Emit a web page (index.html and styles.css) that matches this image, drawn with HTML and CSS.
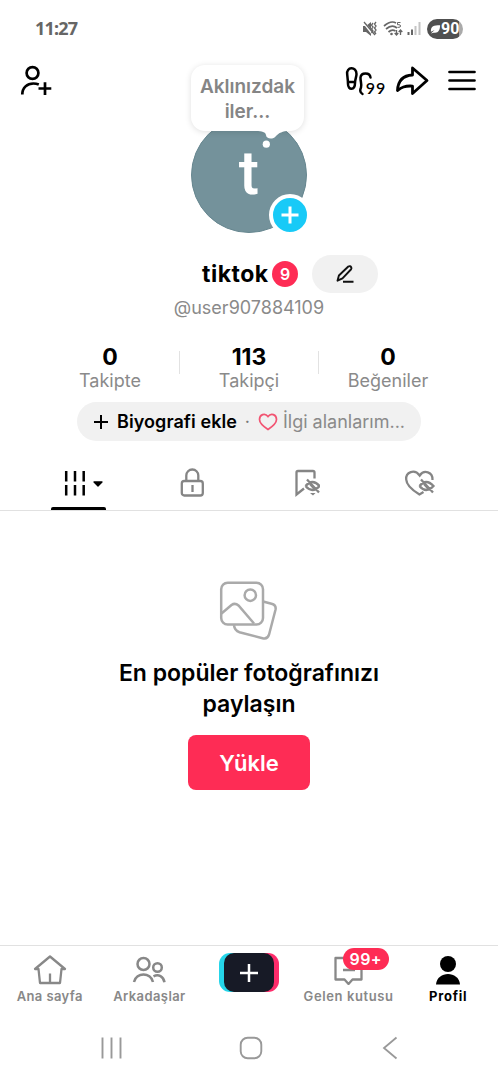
FILE: index.html
```html
<!DOCTYPE html>
<html lang="tr">
<head>
<meta charset="utf-8">
<meta name="viewport" content="width=device-width, initial-scale=1">
<title>Profil</title>
<link rel="stylesheet" href="styles.css">
</head>
<body>
<div class="screen">
  <div class="status">
    <span class="clock">11:27</span>
    <div class="status-icons">
      <svg width="60" height="20" viewBox="0 0 60 20" fill="none" stroke="#666" stroke-width="1.300">
        <path d="M1 7h3l5-4v14l-5-4H1z" fill="#666" stroke="none"/>
        <path d="M1.500 3l10 13" stroke="#fff" stroke-width="2.600"/><path d="M2 3l11 13"/>
        <path d="M11 4l-1.500 2 1.500 2-1.500 2 1.500 2-1.500 2M14 3l-1.500 2 1.500 2-1.500 2 1.500 2-1.500 2 1.500 2"/>
        <path d="M22 7q7-6 12-3M24 10q6-5 11-1M26.500 13q3.500-3 7-1" stroke-width="1.700"/>
        <circle cx="29.500" cy="15" r="1.300" fill="#666" stroke="none"/>
        <path d="M34.500 11v5m-1.800-2l1.800 2 1.800-2M38.500 16v-5m-1.800 2l1.800-2 1.800 2"/>
        <path d="M38.500 3.500h-3v2.200h1.500q1.500 0 1.500 1.300t-1.500 1.300h-1.500" stroke-width="1"/>
        <path d="M46.500 13v3M50 10.500V16" stroke-width="2"/><path d="M53.500 7v9M57.500 3v13" stroke="#c4c4c4" stroke-width="2"/>
      </svg>
      <span class="battery">
        <svg width="11" height="12" viewBox="0 0 12 12"><path d="M1 8C1 3 4 2 11 2c0 5-2 9-7 8l-3 1 4-4-4 2z" fill="#fff"/></svg>
        <b>90</b>
      </span>
    </div>
  </div>

  <header class="header">
    <div class="header-left">
      <svg width="32" height="32" viewBox="0 0 32 32" fill="none" stroke="#000" stroke-width="2.700">
        <circle cx="12.500" cy="8" r="5.900"/><path d="M2.300 29.500c0-7 5-11 11-11q3 0 5.500 1M18.500 23.500h12.800M25 17.300v12.600"/>
      </svg>
    </div>
    <div class="profile-photo">
      <div class="avatar">t</div>
      <div class="bubble">Aklınızdak<br>iler...</div>
      <svg class="bubble-tail" width="50" height="24" viewBox="0 0 50 24" fill="#fff"><path d="M3 0h34c-8 0-11 2-14 5-3 4-10 3-10-1C12.500 1 9 0 3 0z"/><circle cx="13.300" cy="13.200" r="3.600"/></svg>
      <span class="add"><svg width="18" height="18" viewBox="0 0 18 18" stroke="#fff" stroke-width="3"><path d="M.5 9h17M9 .5v17"/></svg></span>
    </div>
    <div class="header-right">
      <div class="steps">
        <svg width="27" height="30" viewBox="0 0 27 30" fill="none" stroke="#000" stroke-width="2.500" stroke-linecap="round">
          <path d="M2.200 8.500C.8.500 11.700 0 11.500 8c0 3-1.500 5-1.500 9 0 7.500-7 7.500-7 1 0-3-.4-6-.8-9.500zM3 16h7"/>
          <path d="M25.500 11.500C25 6 16 6 15.500 11.500c-.2 4 1.500 6.500.5 10-1 2-1.500 5 1.500 6.500"/>
        </svg><b>99</b>
      </div>
      <svg class="share" width="34" height="32" viewBox="0 0 34 32" fill="none" stroke="#000" stroke-width="2.800" stroke-linejoin="round"><path d="M17.500 3L32 15.500 17.500 28.500v-7.400C9 20.500 6 23 2.500 25.500 3 15.500 8 10.500 17.500 10z"/></svg>
      <svg width="28" height="22" viewBox="0 0 28 22" stroke="#000" stroke-width="2.700" stroke-linecap="round"><path d="M1.500 2h25M1.500 10.500h25M1.500 19h25"/></svg>
    </div>
  </header>

  <div class="name-row">
    <h1 class="name">tiktok</h1><span class="count">9</span>
    <button class="edit" aria-label="Düzenle"><svg width="20" height="20" viewBox="0 0 20 20" fill="none" stroke="#111" stroke-width="1.900" stroke-linejoin="round"><path d="M13.300 2.500q2-1 3 1 .5 1-.4 2L7.500 14.300l-5 2.400 1.400-5.200zM8 17.700h10.500"/></svg></button>
  </div>
  <p class="handle">@user907884109</p>

  <div class="stats">
    <div class="stat"><b>0</b><span>Takipte</span></div>
    <div class="stat"><b>113</b><span>Takipçi</span></div>
    <div class="stat"><b>0</b><span>Beğeniler</span></div>
  </div>

  <div class="bio">
    <svg width="16" height="16" viewBox="0 0 16 16" stroke="#000" stroke-width="2"><path d="M1 8h14M8 1v14"/></svg>
    <b>Biyografi ekle</b><span class="dot">·</span>
    <svg width="20" height="18" viewBox="0 0 20 18" fill="none" stroke="#f25472" stroke-width="1.700"><path d="M10 3.500C7-.5 1.500 1.500 1.500 6.500c0 4 4 7 8.500 10 4.500-3 8.500-6 8.500-10C18.500 1.500 13-.5 10 3.500z"/></svg>
    <span class="interests">İlgi alanlarım...</span>
  </div>

  <div class="tabs">
    <div class="tab active">
      <svg class="grid-icon" width="40" height="28" viewBox="0 0 40 28" stroke="#000" stroke-width="2.500"><path d="M2.200 2v10.500M11 2v10.500M19.700 2v10.500M2.200 16v10.500M11 16v10.500M19.700 16v10.500"/><path d="M30 13h8l-4 4z" fill="#000" stroke-width="1.300" stroke-linejoin="round"/></svg>
    </div>
    <div class="tab"><svg width="26" height="30" viewBox="0 0 26 30" fill="none" stroke="#858585" stroke-width="2.300"><rect x="2.800" y="13" width="21" height="14.500" rx="2.500"/><path d="M7.300 13V7.500a6 6 0 0 1 12 0V13M13.500 17v7"/></svg></div>
    <div class="tab"><svg width="28" height="30" viewBox="0 0 28 30" fill="none" stroke="#858585" stroke-width="2.300"><path d="M22.500 10.500V4.500Q22.500 3 21 3H6Q4.500 3 4.500 4.500v22l7.500-6"/><path d="M18 25h5.500L21 27.500z" fill="#858585" stroke="none"/><path d="M13.500 18q7-8 14 0-7 8-14 0M15 11.500l12 13M18 16l5 5.500"/></svg></div>
    <div class="tab"><svg width="32" height="30" viewBox="0 0 32 30" fill="none" stroke="#858585" stroke-width="2.300"><path d="M28.500 12c.5-8-8.500-11-12.800-4.500C10.500.5 1.500 4 2.200 11.500 2.500 17 8 22 15.500 26.500l4-2.500"/><path d="M15.500 18q6.500-8 14 0-7.500 8-14 0M17 11.500l12 13M20 16l5 5.500"/></svg></div>
  </div>

  <main class="empty">
    <svg width="60" height="62" viewBox="0 0 60 62" fill="none" stroke="#aaa" stroke-width="2.500">
      <rect x="2.200" y="3.700" width="41.800" height="41.800" rx="6.500"/><circle cx="31.300" cy="16.200" r="5.700"/>
      <path d="M2.500 34.500l10-8.500q3.500-2.500 7 .5L35 44.500"/><path d="M44 22.500l8.500 2.200q5 1.300 4 6l-6.500 25q-1.500 5-6.500 3.500l-23-6q-5-1.500-5.500-7"/>
    </svg>
    <h2>En popüler fotoğrafınızı<br>paylaşın</h2>
    <button class="upload">Yükle</button>
  </main>

  <nav class="nav">
    <div class="nav-item"><svg width="34" height="32" viewBox="0 0 34 32" fill="none" stroke="#888" stroke-width="2.300" stroke-linejoin="round"><path d="M2 16L17 3.500 32 16h-3.500L27 30H7L5.500 16zM17 20.500V30"/></svg><span>Ana sayfa</span></div>
    <div class="nav-item"><svg width="34" height="32" viewBox="0 0 34 32" fill="none" stroke="#888" stroke-width="2.500"><circle cx="11.500" cy="11" r="6"/><circle cx="25.500" cy="14.500" r="4.300"/><path d="M2 29c2.500-10 16.500-10 19 0M21.500 23.300c5-2.500 10 0 11 6"/></svg><span>Arkadaşlar</span></div>
    <div class="nav-item"><div class="create"><div class="create-inner"><svg width="20" height="20" viewBox="0 0 20 20" stroke="#fff" stroke-width="2.500"><path d="M1 10h18M10 1v18"/></svg></div></div></div>
    <div class="nav-item inbox"><svg width="34" height="32" viewBox="0 0 34 32" fill="none" stroke="#888" stroke-width="2.300" stroke-linejoin="round"><path d="M3.500 5h26v21.500h-9L16.500 31l-4-4.500h-9zM11 17h12"/></svg><i class="badge">99+</i><span>Gelen kutusu</span></div>
    <div class="nav-item current"><svg width="34" height="32" viewBox="0 0 34 32"><circle cx="17" cy="11" r="8"/><path d="M5 31.500C6 17.500 28 17.500 29 31.500z"/></svg><span>Profil</span></div>
  </nav>

  <footer class="system">
    <svg width="22" height="24" viewBox="0 0 22 24" stroke="#999" stroke-width="1.900"><path d="M2.500 1.500v21M11.500 1.500v21M20.500 1.500v21"/></svg>
    <svg class="home" width="24" height="24" viewBox="0 0 24 24" fill="none" stroke="#999" stroke-width="1.900"><rect x="1.700" y="1.700" width="20.600" height="20.600" rx="7"/></svg>
    <svg width="16" height="24" viewBox="0 0 16 24" fill="none" stroke="#999" stroke-width="1.800"><path d="M14.500 1.500L2 12l12.500 10.500"/></svg>
  </footer>
</div>
</body>
</html>
```
FILE: styles.css
```css
* { box-sizing: border-box; }
body { margin: 0; background: #fff; font-family: Inter, "Noto Sans", sans-serif; color: #000; }
svg { display: block; flex: none; }
h1, h2, p { margin: 0; }
button { border: 0; padding: 0; font: inherit; }

.screen { width: 498px; height: 1080px; display: flex; flex-direction: column; overflow: hidden; }

.status { height: 57px; padding: 0 35px; display: flex; align-items: center; justify-content: space-between; }
.clock { margin-bottom: 2px; font: 700 18px/20px "Noto Sans", sans-serif; color: #666; letter-spacing: -.8px; }
.status-icons { display: flex; align-items: center; gap: 5px; }
.battery { width: 36px; height: 20px; border-radius: 10px; background: linear-gradient(90deg, #505050 90%, #aaa 90%); color: #fff; display: flex; align-items: center; padding-left: 3px; }
.battery b { font: 700 16px/20px Roboto, sans-serif; }

.header { height: 176px; padding: 0 21px; display: grid; grid-template-columns: 1fr 116px 1fr; }
.header-left { margin-left: -1px; padding: 8px 0 0; }
.header-right { display: flex; justify-content: flex-end; align-items: center; height: 47px; }
.steps { display: flex; align-items: flex-end; margin-right: 9px; }
.steps svg { margin-bottom: -1px; }
.steps b { font: 600 16px/14px Lato, sans-serif; letter-spacing: .8px; margin-left: -6px; }
.share { margin-right: 19px; }
.header-right > svg:last-child { margin-right: 1px; }

.profile-photo { position: relative; padding-top: 60px; }
.avatar { width: 116px; height: 116px; border-radius: 50%; background: #74929b; border: 1px solid #678790; color: #fff; font: 500 61px/110px Roboto, sans-serif; text-align: center; }
.bubble { position: absolute; left: 0; top: 8px; width: 113px; height: 66px; padding-top: 9px; border-radius: 14px; background: #fff; box-shadow: 0 1px 6px rgba(0, 0, 0, .13); color: #858585; font-size: 19px; font-weight: 600; line-height: 25px; text-align: center; white-space: nowrap; }
.bubble-tail { position: absolute; left: 62px; top: 74px; }
.add { position: absolute; left: 77.500px; top: 137px; width: 42px; height: 42px; border: 4px solid #fff; border-radius: 50%; background: #18caf7; display: grid; place-items: center; }

.name-row { height: 38px; margin-top: 22px; padding-left: 202px; display: flex; align-items: center; }
.name { font-size: 23px; line-height: 30px; font-weight: 700; letter-spacing: .5px; width: 70px; }
.count { width: 26px; height: 26px; border-radius: 50%; background: #fe2c55; color: #fff; font-size: 16px; font-weight: 600; line-height: 26px; text-align: center; }
.edit { width: 66px; height: 38px; margin-left: 14px; border-radius: 19px; background: #f1f1f1; display: grid; place-items: center; }
.handle { margin-top: 3px; color: #8a8a8a; font-size: 18px; line-height: 24px; text-align: center; }

.stats { width: 417px; height: 47px; margin: 25px auto 0; display: grid; grid-template-columns: repeat(3, 1fr); }
.stat { display: flex; flex-direction: column; align-items: center; background: linear-gradient(#e2e2e2, #e2e2e2) no-repeat right 6px / 1px 23px; }
.stat:last-child { background: none; }
.stat b { font-size: 23px; line-height: 24px; }
.stat span { font-size: 18px; line-height: 23px; color: #8a8a8a; }

.bio { width: 344px; height: 39px; margin: 10px auto 0; padding-left: 16px; border-radius: 20px; background: #f1f1f1; display: flex; align-items: center; font-size: 18px; white-space: nowrap; }
.bio b { margin-left: 8px; font-weight: 600; letter-spacing: .07px; }
.dot { width: 21px; text-align: center; color: #777; }
.interests { margin-left: 5px; color: #8a8a8a; }

.tabs { height: 70px; padding: 14px 21px 0; border-bottom: 1px solid #e1e1e1; display: grid; grid-template-columns: repeat(4, 114px); }
.tab { display: grid; place-items: center; }
.active { position: relative; }
.active::after { content: ""; position: absolute; left: 30px; bottom: 0; width: 55px; height: 3px; border-radius: 2px 2px 0 0; background: #000; }
.grid-icon { margin-left: 12px; }

.empty { height: 434px; padding-top: 68px; display: flex; flex-direction: column; align-items: center; }
.empty h2 { margin-top: 17px; font-size: 23px; line-height: 31px; font-weight: 600; text-align: center; }
.upload { width: 122px; height: 55px; margin-top: 15px; border-radius: 8px; background: #fe2c55; color: #fff; font-size: 22px; font-weight: 600; }

.nav { height: 71px; padding-top: 7px; border-top: 1px solid #e1e1e1; display: grid; grid-template-columns: repeat(5, 1fr); }
.nav-item { display: flex; flex-direction: column; align-items: center; color: #888; font-size: 13px; font-weight: 600; line-height: 18px; letter-spacing: .4px; white-space: nowrap; }
.nav-item span { margin-top: 2px; }
.inbox { position: relative; }
.inbox span { letter-spacing: .6px; }
.badge { position: absolute; left: 44px; top: -5px; width: 46px; height: 22px; border-radius: 11px; background: #fe2c55; color: #fff; font-size: 16px; font-style: normal; line-height: 22px; text-align: center; }
.current { color: #000; font-weight: 700; letter-spacing: .8px; }
.create { width: 60px; height: 39px; border-radius: 11px; background: linear-gradient(90deg, #25d5e9 50%, #fe2c6b 50%); padding: 0 5px; }
.create-inner { height: 39px; border-radius: 10px; background: #171a26; display: grid; place-items: center; }

.system { flex: 1; padding: 20px 100px 0; display: flex; align-items: flex-start; justify-content: space-between; }
.home { margin-left: -3px; }
```
